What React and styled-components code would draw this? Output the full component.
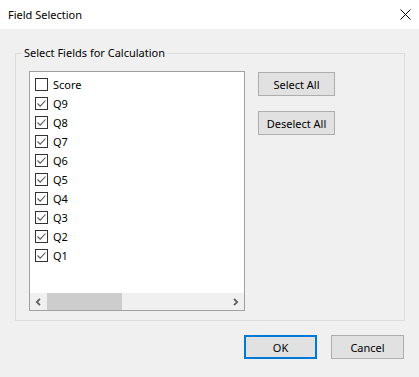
import React from "react";
import styled, { createGlobalStyle } from "styled-components";

const GlobalStyle = createGlobalStyle`
  html, body {
    margin: 0;
    padding: 0;
    background: #f0f0f0;
  }
  body {
    font-family: "Noto Sans", "Open Sans", sans-serif;
    font-size: 11px;
    color: #000;
  }
`;

const Dialog = styled.div`
  width: 419px;
  height: 377px;
  background: #f0f0f0;
  display: flex;
  flex-direction: column;
`;

const TitleBar = styled.div`
  height: 29px;
  background: #fff;
  display: flex;
  align-items: center;
  justify-content: space-between;
  padding: 0 8px 1px 8px;
  box-sizing: border-box;
  font-size: 11px;
`;

const CloseIcon = styled.svg`
  width: 11px;
  height: 11px;
  margin-top: 1px;
`;

const Body = styled.div`
  padding: 16px 14px 0 15px;
  display: flex;
  flex-direction: column;
`;

const GroupBox = styled.fieldset`
  margin: 0;
  min-width: 0;
  border: 1px solid #dcdcdc;
  padding: 10px 0 9px 13px;
  display: flex;
  align-items: flex-start;
  legend {
    padding: 0 2px;
    margin-left: -7px;
    line-height: 16px;
  }
`;

const ListBox = styled.div`
  width: 216px;
  height: 240px;
  box-sizing: border-box;
  border: 1px solid #a0a0a0;
  background: #fff;
  display: flex;
  flex-direction: column;
  justify-content: space-between;
`;

const Items = styled.ul`
  list-style: none;
  margin: 0;
  padding: 3px 0 0 5px;
`;

const Item = styled.li`
  height: 19px;
  display: flex;
  align-items: center;
  gap: 5px;
`;

const Box = styled.span`
  width: 13px;
  height: 13px;
  box-sizing: border-box;
  border: 1px solid #333;
  background: #fff;
  display: flex;
  align-items: center;
  justify-content: center;
`;

const ScrollBar = styled.div`
  height: 17px;
  background: #f0f0f0;
  display: flex;
  align-items: center;
`;

const Arrow = styled.div`
  width: 17px;
  height: 17px;
  display: flex;
  align-items: center;
  justify-content: center;
`;

const Track = styled.div`
  flex: 1;
  height: 17px;
  display: flex;
`;

const Thumb = styled.div`
  width: 75px;
  height: 17px;
  background: #cdcdcd;
`;

const SideButtons = styled.div`
  margin-left: 13px;
  margin-top: 1px;
  display: flex;
  flex-direction: column;
  gap: 15px;
`;

const Button = styled.button`
  width: ${(p) => p.$w || 77}px;
  height: 24px;
  box-sizing: border-box;
  background: #e1e1e1;
  border: ${(p) => (p.$primary ? "2px solid #0078d7" : "1px solid #adadad")};
  font-family: inherit;
  font-size: 11px;
  color: #000;
  padding: 0;
  cursor: default;
`;

const Footer = styled.div`
  display: flex;
  justify-content: flex-end;
  gap: 14px;
  padding: 14px 15px 0 0;
`;

const Check = () => (
  <svg width="11" height="11" viewBox="0 0 11 11">
    <path d="M1.5 5.5 L4.2 8.2 L9.5 2.5" fill="none" stroke="#555" strokeWidth="1.1" />
  </svg>
);

const fields = [
  { name: "Score", checked: false },
  { name: "Q9", checked: true },
  { name: "Q8", checked: true },
  { name: "Q7", checked: true },
  { name: "Q6", checked: true },
  { name: "Q5", checked: true },
  { name: "Q4", checked: true },
  { name: "Q3", checked: true },
  { name: "Q2", checked: true },
  { name: "Q1", checked: true },
];

export default function App() {
  return (
    <Dialog>
      <GlobalStyle />
      <TitleBar>
        <span>Field Selection</span>
        <CloseIcon viewBox="0 0 11 11">
          <path d="M0.5 0.5 L10.5 10.5 M10.5 0.5 L0.5 10.5" stroke="#000" strokeWidth="1" />
        </CloseIcon>
      </TitleBar>
      <Body>
        <GroupBox>
          <legend>Select Fields for Calculation</legend>
          <ListBox>
            <Items>
              {fields.map((f) => (
                <Item key={f.name}>
                  <Box>{f.checked && <Check />}</Box>
                  <span>{f.name}</span>
                </Item>
              ))}
            </Items>
            <ScrollBar>
              <Arrow>
                <svg width="7" height="8" viewBox="0 0 7 8">
                  <path d="M5 0.8 L1.8 4 L5 7.2" fill="none" stroke="#606060" strokeWidth="1.8" />
                </svg>
              </Arrow>
              <Track>
                <Thumb />
              </Track>
              <Arrow>
                <svg width="7" height="8" viewBox="0 0 7 8">
                  <path d="M2 0.8 L5.2 4 L2 7.2" fill="none" stroke="#606060" strokeWidth="1.8" />
                </svg>
              </Arrow>
            </ScrollBar>
          </ListBox>
          <SideButtons>
            <Button>Select All</Button>
            <Button>Deselect All</Button>
          </SideButtons>
        </GroupBox>
      </Body>
      <Footer>
        <Button $w={73} $primary>OK</Button>
        <Button $w={73}>Cancel</Button>
      </Footer>
    </Dialog>
  );
}
